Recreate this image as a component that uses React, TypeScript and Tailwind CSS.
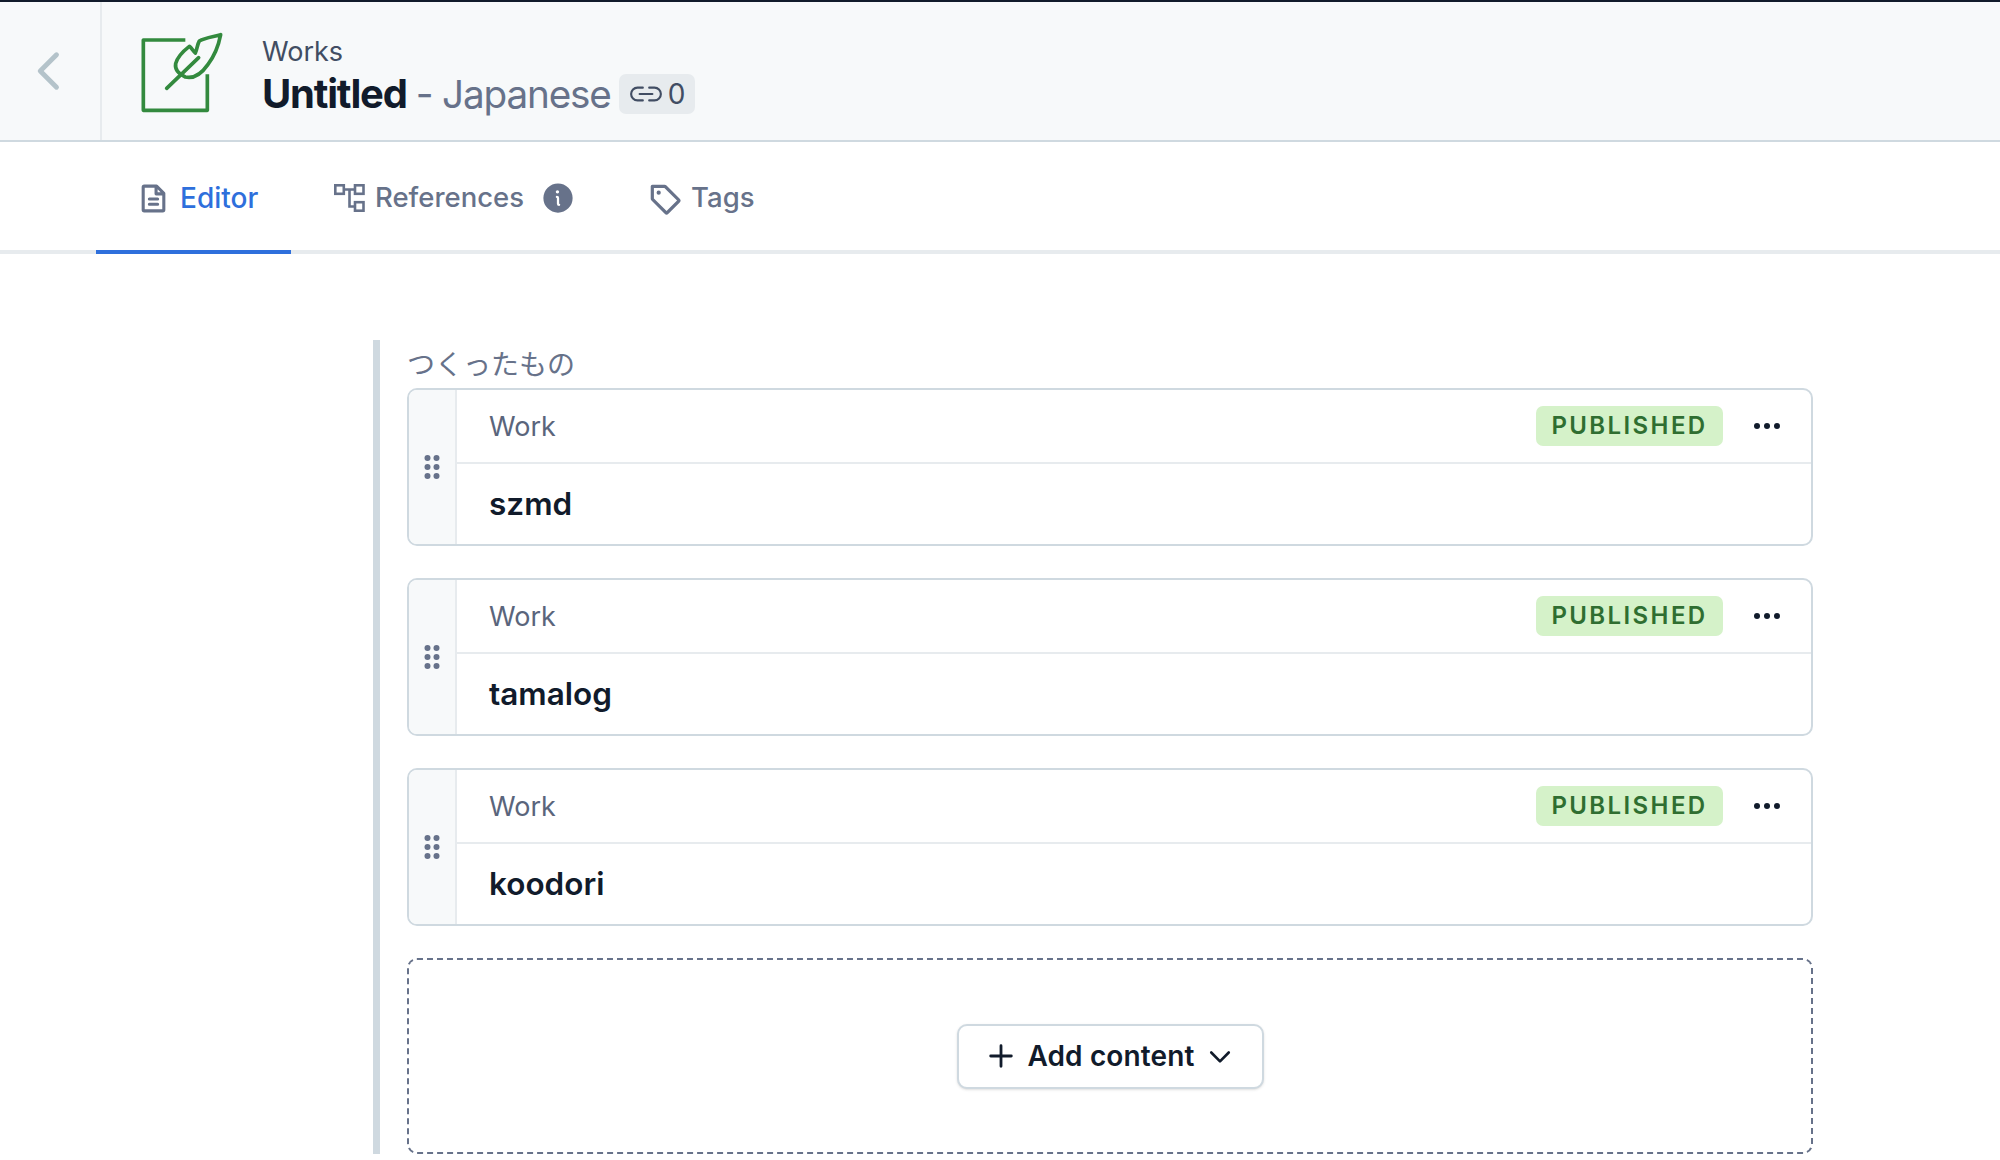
import { PiCaretDownBold, PiCaretLeftBold, PiFileTextBold, PiInfoFill, PiLinkSimpleHorizontal, PiPlusBold, PiTagBold } from "react-icons/pi";

const entries = ["szmd", "tamalog", "koodori"];

function FeatherLogo() {
  return (
    <svg viewBox="0 0 360 300" className="w-[120px] h-[100px] shrink-0" fill="none" stroke="#338a3e" strokeWidth="11" strokeLinecap="round" strokeLinejoin="round">
      <path d="M196 57H70V268H262V160" strokeLinecap="butt" />
      <path d="M302 41C282 47 254 50 238 60C232 70 232 82 226 96C218 88 214 80 208 76C190 90 172 106 167 128C164 146 178 160 196 168C222 174 246 156 264 130C284 104 296 72 302 41Z" />
      <path d="M140 202L236 110" />
    </svg>
  );
}

function TreeIcon() {
  return (
    <svg viewBox="0 0 31 28" className="w-[31px] h-[28px] shrink-0" fill="none" stroke="currentColor" strokeWidth="2.6">
      <rect x="1.3" y="1.3" width="8.5" height="8.5" />
      <rect x="21" y="1.3" width="8.5" height="8.5" />
      <rect x="21" y="18.2" width="8.5" height="8.5" />
      <path d="M10 5.5H21M15.5 5.5V22.5H21" />
    </svg>
  );
}

function DragHandle() {
  return (
    <svg viewBox="0 0 16 24" className="w-[16px] h-[24px]" fill="#67728a">
      {[3, 12, 21].map((y) => (
        <g key={y}>
          <circle cx="3.5" cy={y} r="3" />
          <circle cx="12.5" cy={y} r="3" />
        </g>
      ))}
    </svg>
  );
}

function MoreDots() {
  return (
    <svg viewBox="0 0 26 6" className="w-[26px] h-[6px] shrink-0" fill="#111b2b">
      <circle cx="3" cy="3" r="3" />
      <circle cx="13" cy="3" r="3" />
      <circle cx="23" cy="3" r="3" />
    </svg>
  );
}

function EntryCard({ title }: { title: string }) {
  return (
    <div className="flex h-[158px] rounded-[10px] border-2 border-[#cfd9e0] bg-white overflow-hidden">
      <div className="w-[48px] shrink-0 flex items-center justify-center bg-[#f7f9fa] border-r-2 border-[#e7ebee]">
        <DragHandle />
      </div>
      <div className="flex-1 min-w-0 flex flex-col">
        <div className="h-[74px] flex items-center justify-between pl-[32px] pr-[31px] border-b-2 border-[#e7ebee]">
          <span className="pt-[2px] text-[27px] text-[#5a657c]">Work</span>
          <div className="flex items-center gap-[31px]">
            <span className="h-[40px] w-[187px] flex items-center justify-center rounded-[7px] bg-[#d5f2c9] text-[#2f6e31] text-[24px] font-semibold tracking-[0.1em]">PUBLISHED</span>
            <MoreDots />
          </div>
        </div>
        <div className="flex-1 flex items-center pl-[32px] text-[31.5px] font-semibold text-[#111b2b]">{title}</div>
      </div>
    </div>
  );
}

export default function App() {
  return (
    <div className="w-[2000px] h-[1160px] overflow-hidden bg-white font-['Inter',sans-serif]">
      <header className="h-[142px] flex bg-[#f7f9fa] border-t-2 border-t-[#111b2b] border-b-2 border-b-[#cfd9e0]">
        <div className="w-[102px] shrink-0 flex items-center justify-center border-r-2 border-[#e7ebee]">
          <PiCaretLeftBold className="w-[52px] h-[52px] text-[#b4c3ca]" />
        </div>
        <div className="flex items-center ml-[18px]">
          <FeatherLogo />
          <div className="ml-[22px] pt-[9px] flex flex-col">
            <span className="text-[27px] leading-[36px] text-[#414d63]">Works</span>
            <div className="flex items-center">
              <span className="text-[40px] leading-[48px] font-bold tracking-[-0.03em] text-[#111b2b]">Untitled</span>
              <span className="ml-[9px] text-[38.7px] leading-[48px] tracking-[-0.03em] text-[#67728a]">- Japanese</span>
              <span className="ml-[8px] h-[40px] px-[10px] flex items-center gap-[5px] rounded-[7px] bg-[#e7ebee] text-[28px] text-[#414d63]">
                <PiLinkSimpleHorizontal className="w-[34px] h-[34px]" />0
              </span>
            </div>
          </div>
        </div>
      </header>

      <nav className="h-[112px] flex pl-[96px] border-b-4 border-[#e7ebee]">
        <a className="w-[195px] -mb-[4px] pt-[4px] pl-[41px] flex items-center gap-[10px] border-b-4 border-[#2e6fdc] text-[28px] font-medium text-[#2e6fdc]">
          <PiFileTextBold className="w-[33px] h-[33px] text-[#67728a]" />Editor
        </a>
        <a className="ml-[43px] pt-[4px] flex items-center text-[27.5px] font-medium text-[#67728a]">
          <TreeIcon />
          <span className="ml-[10px]">References</span>
          <PiInfoFill className="w-[36px] h-[36px] ml-[16px]" />
        </a>
        <a className="ml-[71px] pt-[4px] flex items-center gap-[10px] text-[27.5px] font-medium text-[#67728a]">
          <PiTagBold className="w-[34px] h-[34px]" />Tags
        </a>
      </nav>

      <main className="ml-[373px] mt-[86px] w-[1440px] pl-[27px] border-l-[7px] border-[#cfd9e0]">
        <p className="pb-[2px] text-[28px] leading-[46px] text-[#67728a] font-['Noto_Sans_CJK_JP',sans-serif]">つくったもの</p>
        <div className="flex flex-col gap-[32px]">
          {entries.map((e) => (
            <EntryCard key={e} title={e} />
          ))}
          <div className="h-[196px] flex items-center justify-center rounded-[10px] border-2 border-dashed border-[#67728a]">
            <button className="h-[65px] w-[307px] flex items-center justify-center gap-[11px] rounded-[10px] border-2 border-[#cfd9e0] bg-white shadow-sm text-[28px] font-semibold tracking-[0.005em] text-[#111b2b]">
              <PiPlusBold className="w-[30px] h-[30px]" />Add content
              <PiCaretDownBold className="w-[28px] h-[28px]" />
            </button>
          </div>
        </div>
      </main>
    </div>
  );
}
